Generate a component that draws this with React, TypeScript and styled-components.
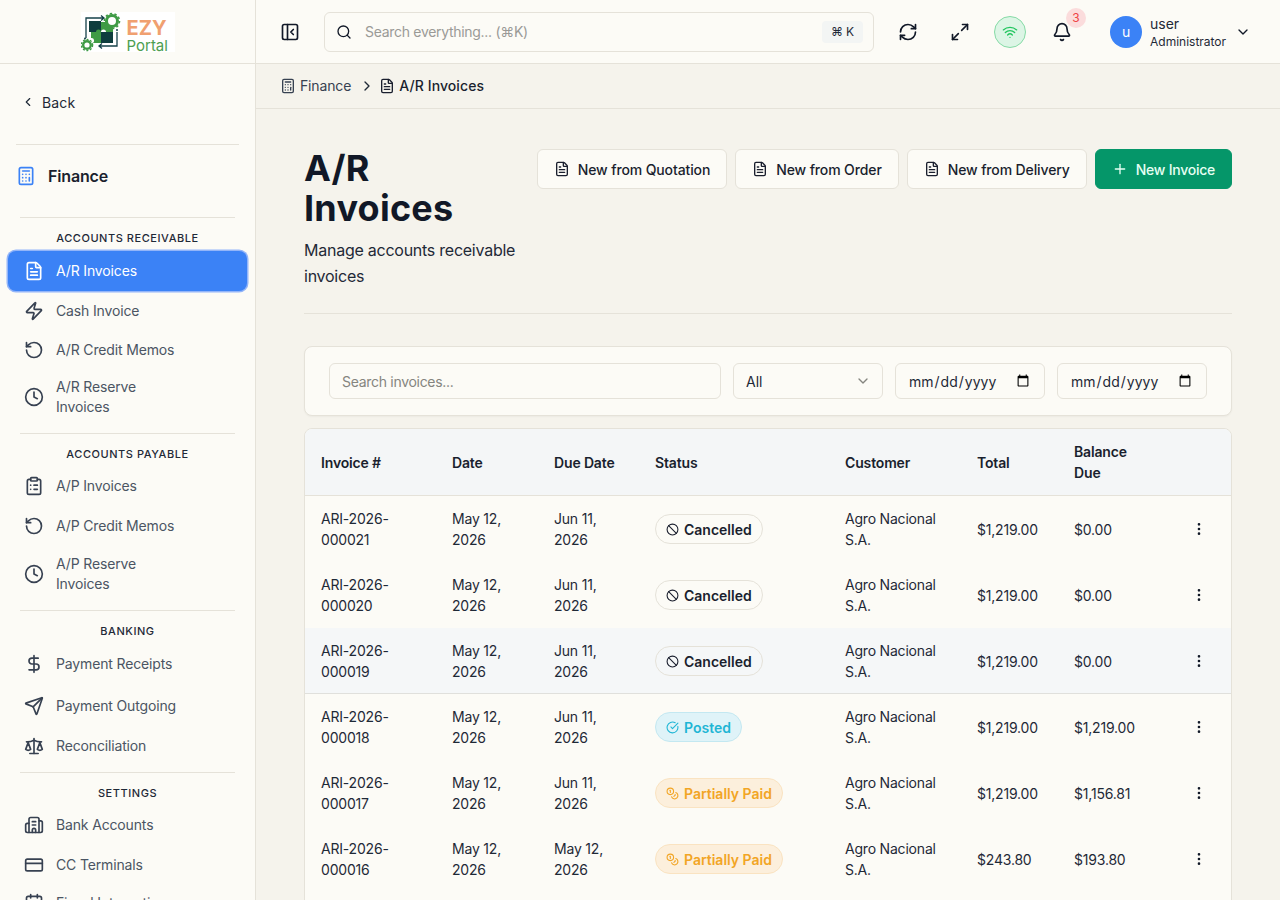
import React from "react";
import styled, { createGlobalStyle } from "styled-components";
import {
  Ban,
  Bell,
  Building2,
  Calculator,
  CalendarCheck,
  ChevronDown,
  ChevronLeft,
  ChevronRight,
  CircleCheckBig,
  ClipboardList,
  Clock,
  Coins,
  CreditCard,
  DollarSign,
  EllipsisVertical,
  FileText,
  Maximize2,
  PanelLeftClose,
  Plus,
  RefreshCw,
  RotateCcw,
  Scale,
  Search,
  Send,
  Wifi,
  Zap,
} from "lucide-react";

const GlobalStyle = createGlobalStyle`
  * { box-sizing: border-box; }
  html, body {
    margin: 0;
    height: 100%;
    overflow: hidden;
    background: #f5f3ec;
    color: #111827;
    font-family: Inter, "Liberation Sans", sans-serif;
    letter-spacing: -0.15px;
  }
`;

type NavEntry = { icon: React.ElementType; label: string; height: number; active?: boolean };
type NavGroup = { title: string; titleHeight: number; items: NavEntry[] };

const navGroups: NavGroup[] = [
  {
    title: "Accounts Receivable",
    titleHeight: 33,
    items: [
      { icon: FileText, label: "A/R Invoices", height: 40, active: true },
      { icon: Zap, label: "Cash Invoice", height: 40 },
      { icon: RotateCcw, label: "A/R Credit Memos", height: 38 },
      { icon: Clock, label: "A/R Reserve Invoices", height: 56 },
    ],
  },
  {
    title: "Accounts Payable",
    titleHeight: 32,
    items: [
      { icon: ClipboardList, label: "A/P Invoices", height: 40 },
      { icon: RotateCcw, label: "A/P Credit Memos", height: 40 },
      { icon: Clock, label: "A/P Reserve Invoices", height: 56 },
    ],
  },
  {
    title: "Banking",
    titleHeight: 33,
    items: [
      { icon: DollarSign, label: "Payment Receipts", height: 40 },
      { icon: Send, label: "Payment Outgoing", height: 44 },
      { icon: Scale, label: "Reconciliation", height: 36 },
    ],
  },
  {
    title: "Settings",
    titleHeight: 32,
    items: [
      { icon: Building2, label: "Bank Accounts", height: 40 },
      { icon: CreditCard, label: "CC Terminals", height: 40 },
      { icon: CalendarCheck, label: "Fiscal Integration", height: 36 },
    ],
  },
];

type Status = "cancelled" | "posted" | "partial";
type Invoice = { no: string; date: string; due: string; status: Status; total: string; balance: string };

const invoices: Invoice[] = [
  { no: "ARI-2026-000021", date: "May 12, 2026", due: "Jun 11, 2026", status: "cancelled", total: "$1,219.00", balance: "$0.00" },
  { no: "ARI-2026-000020", date: "May 12, 2026", due: "Jun 11, 2026", status: "cancelled", total: "$1,219.00", balance: "$0.00" },
  { no: "ARI-2026-000019", date: "May 12, 2026", due: "Jun 11, 2026", status: "cancelled", total: "$1,219.00", balance: "$0.00" },
  { no: "ARI-2026-000018", date: "May 12, 2026", due: "Jun 11, 2026", status: "posted", total: "$1,219.00", balance: "$1,219.00" },
  { no: "ARI-2026-000017", date: "May 12, 2026", due: "Jun 11, 2026", status: "partial", total: "$1,219.00", balance: "$1,156.81" },
  { no: "ARI-2026-000016", date: "May 12, 2026", due: "May 12, 2026", status: "partial", total: "$243.80", balance: "$193.80" },
];

const statusInfo = {
  cancelled: { label: "Cancelled", icon: Ban },
  posted: { label: "Posted", icon: CircleCheckBig },
  partial: { label: "Partially Paid", icon: Coins },
};

const columns = [131, 102, 101, 190, 132, 97, 109, 64];

const LogoMark = () => (
  <svg width="42" height="40" viewBox="0 0 42 40" fill="none">
    <path d="M5 26V6H22M20 3.5l3 2.5-3 2.5" stroke="#16414a" strokeWidth="1.3" />
    <path d="M36 20V34H19M21 31.5l-3 2.5 3 2.5" stroke="#16414a" strokeWidth="1.3" />
    <rect x="8" y="9" width="12" height="11" fill="#0f3d3e" />
    <rect x="20" y="20" width="12" height="11" fill="#0f3d3e" />
    <path d="M20 10h4a2.5 2.5 0 0 1 5 0h3v10H25a2.5 2.5 0 0 0-5 0z" fill="#3f9b45" />
    <path d="M10 20h5a2.5 2.5 0 0 1 5 0v11h-9a2.5 2.5 0 0 0-1-5z" fill="#3f9b45" />
    <circle cx="31" cy="9" r="5.5" fill="#fff" stroke="#3f9b45" strokeWidth="3" />
    <circle cx="31" cy="9" r="7.5" stroke="#3f9b45" strokeWidth="1.6" strokeDasharray="2.4 2.3" />
    <circle cx="6" cy="33" r="3.8" fill="#fff" stroke="#3f9b45" strokeWidth="2.4" />
    <circle cx="6" cy="33" r="5.6" stroke="#3f9b45" strokeWidth="1.4" strokeDasharray="2 1.6" />
    <circle cx="4" cy="26.500" r="1" fill="#16414a" />
    <circle cx="36" cy="18" r="1" fill="#16414a" />
  </svg>
);

export default function App() {
  return (
    <>
      <GlobalStyle />
      <Shell>
        <Sidebar>
          <LogoBar>
            <LogoBox>
              <LogoMark />
              <LogoWords>
                <LogoEzy>EZY</LogoEzy>
                <LogoPortal>Portal</LogoPortal>
              </LogoWords>
            </LogoBox>
          </LogoBar>
          <BackRow>
            <ChevronLeft size={14} strokeWidth={2} />
            <span>Back</span>
          </BackRow>
          <ModuleRow>
            <Calculator size={20} color="#3b82f6" />
            <span>Finance</span>
          </ModuleRow>
          {navGroups.map((group) => (
            <NavSection key={group.title}>
              <NavTitle $height={group.titleHeight}>{group.title}</NavTitle>
              {group.items.map((item) => (
                <NavItem key={item.label} $height={item.height} $active={item.active}>
                  <item.icon size={20} strokeWidth={2} />
                  <span>{item.label}</span>
                </NavItem>
              ))}
            </NavSection>
          ))}
        </Sidebar>

        <Body>
          <Topbar>
            <IconButton>
              <PanelLeftClose size={20} />
            </IconButton>
            <GlobalSearch>
              <Search size={16} color="#111827" />
              <GlobalHint>Search everything... (⌘K)</GlobalHint>
              <Kbd>⌘ K</Kbd>
            </GlobalSearch>
            <TopIcons>
              <IconButton>
                <RefreshCw size={20} />
              </IconButton>
              <IconButton>
                <Maximize2 size={20} />
              </IconButton>
              <WifiDot>
                <Wifi size={16} />
              </WifiDot>
              <BellWrap>
                <Bell size={20} />
                <BellBadge>3</BellBadge>
              </BellWrap>
              <UserBlock>
                <Avatar>u</Avatar>
                <UserText>
                  <UserName>user</UserName>
                  <UserRole>Administrator</UserRole>
                </UserText>
                <ChevronDown size={16} />
              </UserBlock>
            </TopIcons>
          </Topbar>

          <Crumbs>
            <CrumbPart>
              <Calculator size={16} />
              Finance
            </CrumbPart>
            <CrumbArrow>
              <ChevronRight size={16} />
            </CrumbArrow>
            <CrumbPart $current>
              <FileText size={16} />
              A/R Invoices
            </CrumbPart>
          </Crumbs>

          <Page>
            <PageHead>
              <TitleBlock>
                <PageTitle>A/R Invoices</PageTitle>
                <PageSub>Manage accounts receivable invoices</PageSub>
              </TitleBlock>
              <Actions>
                <GhostButton>
                  <FileText size={16} />
                  New from Quotation
                </GhostButton>
                <GhostButton>
                  <FileText size={16} />
                  New from Order
                </GhostButton>
                <GhostButton>
                  <FileText size={16} />
                  New from Delivery
                </GhostButton>
                <PrimaryButton>
                  <Plus size={16} />
                  New Invoice
                </PrimaryButton>
              </Actions>
            </PageHead>

            <FilterCard>
              <SearchField placeholder="Search invoices..." />
              <SelectWrap>
                <SelectField defaultValue="All">
                  <option>All</option>
                </SelectField>
                <SelectChevron>
                  <ChevronDown size={16} />
                </SelectChevron>
              </SelectWrap>
              <DateField type="date" />
              <DateField type="date" />
            </FilterCard>

            <TableCard>
              <Table>
                <colgroup>
                  {columns.map((w, i) => (
                    <col key={i} width={w} />
                  ))}
                </colgroup>
                <thead>
                  <tr>
                    <Th>Invoice #</Th>
                    <Th>Date</Th>
                    <Th>Due Date</Th>
                    <Th>Status</Th>
                    <Th>Customer</Th>
                    <Th>Total</Th>
                    <Th>Balance Due</Th>
                    <Th />
                  </tr>
                </thead>
                <tbody>
                  {invoices.map((inv, i) => {
                    const info = statusInfo[inv.status];
                    return (
                      <Row key={inv.no} $hover={i === 2}>
                        <Td>{inv.no}</Td>
                        <Td>{inv.date}</Td>
                        <Td>{inv.due}</Td>
                        <Td>
                          <StatusPill $status={inv.status}>
                            <info.icon size={13} />
                            {info.label}
                          </StatusPill>
                        </Td>
                        <Td>Agro Nacional S.A.</Td>
                        <Td>{inv.total}</Td>
                        <Td>{inv.balance}</Td>
                        <MenuCell>
                          <EllipsisVertical size={16} />
                        </MenuCell>
                      </Row>
                    );
                  })}
                </tbody>
              </Table>
            </TableCard>
          </Page>
        </Body>
      </Shell>
    </>
  );
}

const Shell = styled.div`
  display: flex;
  width: 100%;
  height: 100vh;
  overflow: hidden;
`;

const Sidebar = styled.aside`
  width: 256px;
  flex-shrink: 0;
  height: 100%;
  overflow: hidden;
  background: #fcfbf6;
  border-right: 1px solid #e5e2d9;
`;

const LogoBar = styled.div`
  height: 64px;
  display: flex;
  align-items: center;
  justify-content: center;
  border-bottom: 1px solid #e5e2d9;
`;

const LogoBox = styled.div`
  display: flex;
  align-items: flex-start;
  gap: 4px;
  width: 94px;
  height: 40px;
  background: #fff;
`;

const LogoWords = styled.div`
  display: flex;
  flex-direction: column;
  padding-top: 6px;
`;

const LogoEzy = styled.span`
  font-size: 20px;
  line-height: 20px;
  font-weight: 700;
  letter-spacing: 0;
  color: #f0a070;
`;

const LogoPortal = styled.span`
  font-size: 15px;
  line-height: 15px;
  letter-spacing: 0;
  color: #4d9e50;
`;

const BackRow = styled.div`
  display: flex;
  align-items: center;
  gap: 7px;
  height: 40px;
  margin: 18px 16px 22px 21px;
  font-size: 14px;
  letter-spacing: 0.15px;
  color: #1f2937;
`;

const ModuleRow = styled.div`
  display: flex;
  align-items: center;
  gap: 12px;
  height: 73px;
  margin: 0 16px;
  padding-bottom: 10px;
  border-top: 1px solid #e5e2d9;
  font-size: 16px;
  font-weight: 600;
  color: #1a1f2e;
`;

const NavSection = styled.section`
  margin: 0 8px 8px;
  &::before {
    content: "";
    display: block;
    margin: 0 12px;
    border-top: 1px solid #e5e2d9;
  }
`;

const NavTitle = styled.div<{ $height: number }>`
  padding-top: 13px;
  height: ${(p) => p.$height}px;
  line-height: 14px;
  text-align: center;
  font-size: 11px;
  font-weight: 500;
  letter-spacing: 0.55px;
  text-transform: uppercase;
  color: #1f2937;
`;

const NavItem = styled.div<{ $height: number; $active?: boolean }>`
  display: flex;
  align-items: center;
  gap: 12px;
  height: ${(p) => p.$height}px;
  padding-left: 16px;
  border-radius: 8px;
  font-size: 14px;
  line-height: 20px;
  color: ${(p) => (p.$active ? "#fff" : "#4b5563")};
  background: ${(p) => (p.$active ? "#3b82f6" : "transparent")};
  box-shadow: ${(p) => (p.$active ? "0 0 0 1.5px #93b5f9" : "none")};

  svg {
    flex-shrink: 0;
    color: ${(p) => (p.$active ? "#fff" : "#374151")};
  }
  span {
    max-width: 125px;
  }
`;

const Body = styled.div`
  flex: 1;
  min-width: 0;
  display: flex;
  flex-direction: column;
  height: 100%;
  overflow: hidden;
`;

const Topbar = styled.header`
  display: flex;
  align-items: center;
  height: 64px;
  flex-shrink: 0;
  padding: 0 16px;
  background: #fcfbf6;
  border-bottom: 1px solid #e5e2d9;
`;

const IconButton = styled.div`
  width: 36px;
  height: 36px;
  display: flex;
  align-items: center;
  justify-content: center;
  color: #111827;
`;

const GlobalSearch = styled.div`
  display: flex;
  align-items: center;
  width: 550px;
  height: 40px;
  margin-left: 16px;
  padding: 0 10px 0 11px;
  border: 1px solid #e5e2d9;
  border-radius: 6px;
  background: #fcfbf6;
`;

const GlobalHint = styled.span`
  flex: 1;
  margin-left: 13px;
  font-size: 14px;
  letter-spacing: -0.3px;
  color: #9a9a96;
`;

const Kbd = styled.span`
  padding: 2px 9px;
  border-radius: 4px;
  background: #f3f5f4;
  font-size: 12px;
  line-height: 18px;
  font-weight: 400;
  color: #1f2937;
`;

const TopIcons = styled.div`
  display: flex;
  align-items: center;
  margin-left: 16px;

  > div:nth-child(2) {
    margin-left: 16px;
  }
`;

const WifiDot = styled.div`
  width: 32px;
  height: 32px;
  margin-left: 16px;
  display: flex;
  align-items: center;
  justify-content: center;
  border-radius: 50%;
  border: 1px solid #86dba6;
  background: #dcf5e5;
  color: #22c55e;
`;

const BellWrap = styled.div`
  position: relative;
  width: 36px;
  height: 36px;
  margin-left: 18px;
  display: flex;
  align-items: center;
  justify-content: center;
  color: #111827;
`;

const BellBadge = styled.span`
  position: absolute;
  top: -6px;
  right: -6px;
  width: 20px;
  height: 20px;
  display: flex;
  align-items: center;
  justify-content: center;
  border-radius: 50%;
  background: #fbdcdc;
  color: #ef4444;
  font-size: 12px;
`;

const UserBlock = styled.div`
  display: flex;
  align-items: center;
  margin-left: 30px;

  > svg {
    margin-left: 9px;
  }
`;

const Avatar = styled.div`
  width: 32px;
  height: 32px;
  display: flex;
  align-items: center;
  justify-content: center;
  border-radius: 50%;
  background: #3b82f6;
  color: #fff;
  font-size: 14px;
`;

const UserText = styled.div`
  display: flex;
  flex-direction: column;
  margin-left: 8px;
  padding-top: 2px;
`;

const UserName = styled.span`
  font-size: 14px;
  line-height: 18px;
  letter-spacing: 0;
  color: #1f2937;
`;

const UserRole = styled.span`
  font-size: 12px;
  line-height: 18px;
  letter-spacing: 0;
  color: #1f2937;
`;

const Crumbs = styled.nav`
  display: flex;
  align-items: center;
  gap: 8px;
  height: 45px;
  flex-shrink: 0;
  padding: 0 24px 1px 24px;
  border-bottom: 1px solid #e5e2d9;
  color: #1f2937;
`;

const CrumbArrow = styled.span`
  display: flex;
  margin-right: -4px;
`;

const CrumbPart = styled.span<{ $current?: boolean }>`
  display: flex;
  align-items: center;
  gap: 4px;
  font-size: 14px;
  font-weight: ${(p) => (p.$current ? 500 : 400)};
  letter-spacing: ${(p) => (p.$current ? "0.1px" : "-0.15px")};
  color: ${(p) => (p.$current ? "#1a1f2e" : "#374151")};
`;

const Page = styled.main`
  flex: 1;
  padding: 40px 48px 0;
`;

const PageHead = styled.div`
  display: flex;
  align-items: flex-start;
  padding-bottom: 24px;
  margin-bottom: 32px;
  border-bottom: 1px solid #e5e2d9;
`;

const TitleBlock = styled.div`
  flex: 1;
  min-width: 0;
  padding-right: 16px;
`;

const PageTitle = styled.h1`
  margin: -1px 0 0;
  font-size: 36px;
  line-height: 40px;
  font-weight: 700;
  letter-spacing: 0.25px;
  color: #111827;
`;

const PageSub = styled.p`
  margin: 9px 0 0;
  font-size: 16px;
  line-height: 26px;
  letter-spacing: -0.25px;
  color: #1f2937;
`;

const Actions = styled.div`
  display: flex;
  gap: 8px;
  flex-shrink: 0;
`;

const GhostButton = styled.button`
  display: flex;
  align-items: center;
  gap: 8px;
  height: 40px;
  padding: 0 16px;
  border: 1px solid #e5e2d9;
  border-radius: 6px;
  background: #fcfbf6;
  font: 500 14px Inter, "Liberation Sans", sans-serif;
  letter-spacing: -0.12px;
  color: #1a1f2e;
  white-space: nowrap;
`;

const PrimaryButton = styled(GhostButton)`
  border-color: #059669;
  background: #059669;
  letter-spacing: -0.25px;
  color: #e6fff3;
`;

const FilterCard = styled.div`
  display: flex;
  gap: 12px;
  padding: 16px 24px;
  margin-bottom: 12px;
  background: #fcfbf6;
  border: 1px solid #e5e2d9;
  border-radius: 8px;
  box-shadow: 0 1px 2px rgba(0, 0, 0, 0.04);
`;

const fieldStyle = `
  height: 36px;
  border: 1px solid #e5e2d9;
  border-radius: 6px;
  background: #fcfbf6;
  font: 14px Inter, "Liberation Sans", sans-serif;
  color: #1f2937;
  outline: none;
`;

const SearchField = styled.input`
  ${fieldStyle}
  flex: 1;
  min-width: 0;
  padding: 0 12px;
  letter-spacing: -0.3px;
  &::placeholder {
    color: #85857f;
  }
`;

const SelectWrap = styled.div`
  position: relative;
  width: 150px;
  flex-shrink: 0;
`;

const SelectField = styled.select`
  ${fieldStyle}
  width: 100%;
  padding: 0 12px;
  appearance: none;
`;

const SelectChevron = styled.span`
  position: absolute;
  top: 10px;
  right: 12px;
  display: flex;
  color: #85857f;
  pointer-events: none;
`;

const DateField = styled.input`
  ${fieldStyle}
  width: 150px;
  flex-shrink: 0;
  padding: 0 12px;
`;

const TableCard = styled.div`
  padding-bottom: 40px;
  background: #fcfbf6;
  border: 1px solid #e5e2d9;
  border-radius: 8px;
  overflow: hidden;
`;

const Table = styled.table`
  width: 926px;
  table-layout: fixed;
  border-collapse: collapse;
`;

const Th = styled.th`
  height: 65px;
  padding: 12px 16px;
  background: #f4f6f7;
  border-bottom: 1px solid #e5e2d9;
  text-align: left;
  font-size: 14px;
  line-height: 21px;
  font-weight: 600;
  color: #1a1f2e;
`;

const Row = styled.tr<{ $hover?: boolean }>`
  background: ${(p) => (p.$hover ? "#f5f7f8" : "transparent")};
  box-shadow: ${(p) => (p.$hover ? "inset 0 -1px 0 #e0e0dc" : "none")};
`;

const Td = styled.td`
  height: 66px;
  padding: 12px 16px;
  font-size: 14px;
  line-height: 21px;
  letter-spacing: -0.2px;
  color: #1f2937;
`;

const MenuCell = styled(Td)`
  color: #111827;

  svg {
    display: block;
    margin: 0 auto;
  }
`;

const pillColors = {
  cancelled: { bg: "transparent", border: "#e5e2d9", text: "#1a1f2e" },
  posted: { bg: "#dff3f8", border: "#c3e8f1", text: "#1fb6d5" },
  partial: { bg: "#fcefdc", border: "#fae3c1", text: "#f2a524" },
};

const StatusPill = styled.span<{ $status: Status }>`
  display: inline-flex;
  align-items: center;
  gap: 5px;
  height: 30px;
  padding: 0 10px;
  border-radius: 15px;
  border: 1px solid ${(p) => pillColors[p.$status].border};
  background: ${(p) => pillColors[p.$status].bg};
  color: ${(p) => pillColors[p.$status].text};
  font-size: 14px;
  font-weight: 600;
  letter-spacing: 0;
  white-space: nowrap;
`;
